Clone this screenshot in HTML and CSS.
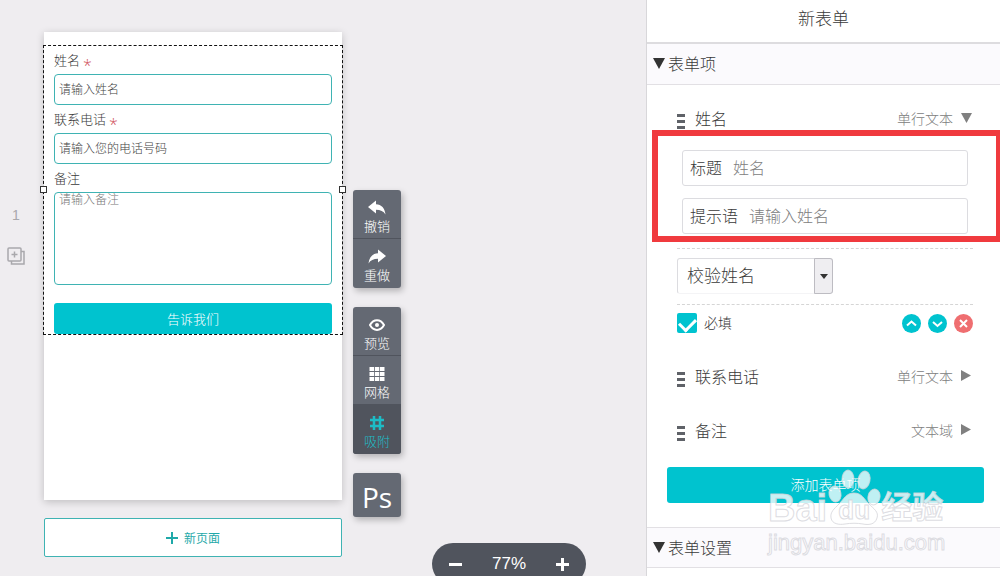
FILE: index.html
```html
<!DOCTYPE html>
<html lang="zh-CN">
<head>
    <meta charset="UTF-8">
    <meta name="viewport" content="width=device-width, initial-scale=1.0">
    <title>新表单</title>
    <link rel="stylesheet" href="styles.css">
</head>
<body>
    <main class="editor">
        <div class="page-nav">
            <span class="page-number">1</span>
            <button type="button" class="copy-page" aria-label="复制页面">
                <svg width="18" height="18" viewBox="0 0 18 18" fill="none" stroke="#a9a8ac" stroke-width="1.5">
                    <rect x="1" y="1" width="13" height="13" rx="1"/>
                    <path d="M4.500 14v3H17V4.500h-3M7.500 4.500v6M4.500 7.500h6"/>
                </svg>
            </button>
        </div>

        <div class="pages">
            <div class="phone">
                <form class="form-block">
                    <label for="name">姓名<span class="star">*</span></label>
                    <input type="text" id="name" placeholder="请输入姓名">
                    <label for="tel">联系电话<span class="star">*</span></label>
                    <input type="text" id="tel" placeholder="请输入您的电话号码">
                    <label for="note">备注</label>
                    <textarea id="note" placeholder="请输入备注"></textarea>
                    <button type="button" class="submit">告诉我们</button>
                    <span class="handle left"></span>
                    <span class="handle right"></span>
                </form>
            </div>
            <button type="button" class="new-page">
                <svg width="12" height="12" viewBox="0 0 12 12" stroke="#1fa9a9" stroke-width="2"><path d="M6 0v12M0 6h12"/></svg>
                新页面
            </button>
        </div>

        <div class="tools">
            <div class="tool-group">
                <button type="button" class="tool">
                    <svg width="18" height="16" viewBox="0 0 18 16" fill="#fff"><path d="M0 7L8 0.500v3.700c5.500.3 8.800 3.800 9.500 10.300C15.500 11.300 12.500 9.800 8 9.800v3.700z"/></svg>
                    撤销
                </button>
                <button type="button" class="tool">
                    <svg width="18" height="16" viewBox="0 0 18 16" fill="#fff"><path d="M18 7L10 0.500v3.700C4.500 4.500 1.200 8 .5 14.500 2.500 11.300 5.500 9.800 10 9.800v3.700z"/></svg>
                    重做
                </button>
            </div>
            <div class="tool-group">
                <button type="button" class="tool">
                    <svg width="18" height="16" viewBox="0 0 18 16" fill="none" stroke="#fff" stroke-width="2"><path d="M2 8c3.500-6.500 10.500-6.500 14 0-3.500 6.500-10.500 6.500-14 0z"/><circle cx="9" cy="8" r="2" fill="#fff" stroke="none"/></svg>
                    预览
                </button>
                <button type="button" class="tool">
                    <svg width="16" height="16" viewBox="0 0 16 16" fill="#fff"><path d="M0.500 1h4.500v4H0.500zM5.800 1h4.500v4H5.800zM11 1h4.500v4H11zM0.500 6h4.500v4H0.500zM5.800 6h4.500v4H5.800zM11 6h4.500v4H11zM0.500 11h4.500v4H0.500zM5.800 11h4.500v4H5.800zM11 11h4.500v4H11z"/></svg>
                    网格
                </button>
                <button type="button" class="tool active">
                    <svg width="16" height="16" viewBox="0 0 16 16" stroke="#1dbcc6" stroke-width="2.500"><path d="M5 1v14M11 1v14M1 5h14M1 11h14"/></svg>
                    吸附
                </button>
            </div>
            <div class="tool-group">
                <button type="button" class="tool ps">Ps</button>
            </div>
        </div>

        <div class="zoom-bar">
            <button type="button" aria-label="缩小"><svg width="13" height="13" viewBox="0 0 13 13" stroke="#fff" stroke-width="3"><path d="M0 6.500h13"/></svg></button>
            <span>77%</span>
            <button type="button" aria-label="放大"><svg width="13" height="13" viewBox="0 0 13 13" stroke="#fff" stroke-width="3"><path d="M0 6.500h13M6.500 0v13"/></svg></button>
        </div>
    </main>

    <aside class="sidebar">
        <h1>新表单</h1>
        <h2><svg width="12" height="12" viewBox="0 0 12 12" fill="#333"><path d="M0 1h12L6 12z"/></svg>表单项</h2>

        <div class="items">
            <div class="item">
                <span class="grip"></span>
                <span class="item-name">姓名</span>
                <span class="item-type">单行文本</span>
                <svg width="12" height="12" viewBox="0 0 12 12" fill="#808080"><path d="M0 1h11L5.500 11z"/></svg>
            </div>
            <div class="fields">
                <div class="field">
                    <label for="title">标题</label>
                    <input type="text" id="title" value="姓名">
                </div>
                <div class="field">
                    <label for="tip">提示语</label>
                    <input type="text" id="tip" value="请输入姓名">
                </div>
                <div class="highlight"></div>
            </div>
            <div class="check-type">
                <div class="select-box">
                    <select aria-label="校验">
                        <option>校验姓名</option>
                    </select>
                    <span class="select-arrow"><svg width="8" height="5" viewBox="0 0 8 5" fill="#333"><path d="M0 0h8L4 5z"/></svg></span>
                </div>
            </div>
            <div class="options">
                <input type="checkbox" id="required" checked>
                <label for="required">必填</label>
                <button type="button" class="round" aria-label="上移"><svg width="19" height="19" viewBox="0 0 19 19"><path d="M5 11.500l4.500-4 4.500 4"/></svg></button>
                <button type="button" class="round" aria-label="下移"><svg width="19" height="19" viewBox="0 0 19 19"><path d="M5 8l4.500 4 4.500-4"/></svg></button>
                <button type="button" class="round delete" aria-label="删除"><svg width="19" height="19" viewBox="0 0 19 19"><path d="M6 6l7 7M13 6l-7 7"/></svg></button>
            </div>
            <div class="item">
                <span class="grip"></span>
                <span class="item-name">联系电话</span>
                <span class="item-type">单行文本</span>
                <svg width="12" height="12" viewBox="0 0 12 12" fill="#808080"><path d="M0 0l10 5.500-10 5.500z"/></svg>
            </div>
            <div class="item">
                <span class="grip"></span>
                <span class="item-name">备注</span>
                <span class="item-type">文本域</span>
                <svg width="12" height="12" viewBox="0 0 12 12" fill="#808080"><path d="M0 0l10 5.500-10 5.500z"/></svg>
            </div>
        </div>
        <button type="button" class="add-item">添加表单项</button>

        <h2 class="settings"><svg width="12" height="12" viewBox="0 0 12 12" fill="#333"><path d="M0 1h12L6 12z"/></svg>表单设置</h2>

        <div class="watermark">
            <div class="brand">
                <span>Bai</span>
                <span class="paw">
                    <svg width="54" height="58" viewBox="0 0 54 58">
                        <ellipse cx="8" cy="25" rx="6" ry="8" transform="rotate(-12 8 25)"/>
                        <ellipse cx="21" cy="10" rx="6" ry="9"/>
                        <ellipse cx="37" cy="11" rx="6" ry="9" transform="rotate(12 37 11)"/>
                        <ellipse cx="47" cy="28" rx="6" ry="8" transform="rotate(12 47 28)"/>
                        <path d="M27 24c8 0 10 6 15 11s10 8 8 14c-2 7-9 7-14 6-6-1-12-1-18 0-6 1-13 0-14-6-1-6 3-9 8-14s7-11 15-11z"/>
                    </svg>
                    <span class="du">du</span>
                </span>
                <span class="cn">经验</span>
            </div>
            <div class="url">jingyan.baidu.com</div>
        </div>
    </aside>
</body>
</html>
```

FILE: styles.css
```css
* {
    box-sizing: border-box;
}
body {
    display: flex;
    height: 100vh;
    margin: 0;
    overflow: hidden;
    font-family: "Liberation Sans", "Noto Sans CJK SC", sans-serif;
    font-weight: 300;
    color: #3a3a3a;
    background-color: #efedf0;
}
button, input, select, textarea {
    font: inherit;
    margin: 0;
}
button {
    padding: 0;
    border: none;
    background: none;
    cursor: pointer;
}
svg {
    display: block;
    flex: none;
}

/* editor */
.editor {
    flex: 1;
    display: flex;
    position: relative;
    padding-top: 32px;
}
.page-nav {
    display: flex;
    flex-direction: column;
    align-items: center;
    width: 32px;
    margin-right: 12px;
    padding-top: 173px;
}
.page-number {
    font-size: 14px;
    line-height: 20px;
    color: #a9a8ac;
}
.copy-page {
    margin-top: 22px;
}
.pages {
    width: 298px;
}
.phone {
    height: 468px;
    padding-top: 13px;
    background-color: #fff;
    box-shadow: 0 2px 8px rgba(0, 0, 0, 0.2);
}
.form-block {
    display: flex;
    flex-direction: column;
    position: relative;
    margin: 0 -1px;
    padding: 0 10px;
    border: 1px dashed #111;
    font-size: 13px;
}
.form-block label {
    height: 28px;
    line-height: 29px;
}
.star {
    margin-left: 3px;
    line-height: 1;
    vertical-align: -6px;
    font-family: "Open Sans", sans-serif;
    font-size: 16px;
    color: #d0505a;
}
.form-block input, .form-block textarea {
    height: 31px;
    padding: 0 4px;
    border: 1px solid #3fb3b3;
    border-radius: 4px;
    background-color: #fff;
    font-size: 12px;
    outline: none;
}
.form-block textarea {
    height: 93px;
    line-height: 15px;
    resize: none;
}
.form-block input::placeholder {
    color: #444;
}
.form-block textarea::placeholder {
    color: #777;
}
.submit {
    height: 31px;
    margin-top: 18px;
    border-radius: 3px;
    background-color: #00c3cf;
    color: #fff;
}
.handle {
    position: absolute;
    top: 50%;
    width: 7px;
    height: 7px;
    margin-top: -4px;
    border: 1px solid #333;
    background-color: #fff;
}
.left {
    left: -4px;
}
.right {
    right: -4px;
}
.new-page {
    display: flex;
    justify-content: center;
    align-items: center;
    gap: 6px;
    width: 100%;
    height: 39px;
    margin-top: 18px;
    border: 1px solid #3fb3b3;
    border-radius: 2px;
    background-color: #fff;
    font-size: 12px;
    font-weight: 400;
    color: #1fa9a9;
}

/* toolbar */
.tools {
    display: flex;
    flex-direction: column;
    gap: 19px;
    width: 48px;
    margin-left: 11px;
    padding-top: 158px;
}
.tool-group {
    overflow: hidden;
    border-radius: 3px;
    background-color: #646973;
    box-shadow: 2px 3px 6px rgba(0, 0, 0, 0.25);
}
.tool {
    display: flex;
    flex-direction: column;
    align-items: center;
    gap: 1px;
    width: 100%;
    height: 49px;
    padding-top: 10px;
    border-bottom: 1px solid #50545d;
    font-size: 13px;
    line-height: 20px;
    color: #fff;
}
.tool:last-child {
    border-bottom: none;
}
.active {
    background-color: #50545d;
    color: #1dbcc6;
}
.ps {
    height: 44px;
    padding-top: 3px;
    justify-content: center;
    font-family: "Open Sans", sans-serif;
    font-size: 28px;
    font-weight: 500;
}
.zoom-bar {
    display: flex;
    justify-content: space-between;
    align-items: center;
    position: absolute;
    right: 60px;
    bottom: -9px;
    width: 154px;
    height: 42px;
    padding: 0 17px;
    border-radius: 21px;
    background-color: #50545d;
    font-family: "Liberation Sans", sans-serif;
    font-size: 17px;
    font-weight: 400;
    color: #fff;
}

/* sidebar */
.sidebar {
    flex: 0 0 354px;
    position: relative;
    overflow: hidden;
    border-left: 1px solid #d8d7da;
    background-color: #fff;
}
h1 {
    height: 44px;
    margin: 0;
    border-bottom: 2px solid #dddcdf;
    font-size: 17px;
    line-height: 40px;
    font-weight: 300;
    text-align: center;
}
h2 {
    display: flex;
    align-items: center;
    gap: 3px;
    height: 41px;
    margin: 0;
    padding: 0 0 2px 6px;
    border-bottom: 1px solid #e2e0e4;
    background-color: #fbfafd;
    font-size: 16px;
    font-weight: 300;
}
.items {
    padding: 16px 27px 18px 30px;
}
.item {
    display: flex;
    align-items: center;
    height: 36px;
    margin-bottom: 18px;
    padding-bottom: 2px;
    font-size: 16px;
}
.item:first-child, .item:last-child {
    margin-bottom: 0;
}
.grip {
    width: 8px;
    height: 15px;
    margin: 6px 10px 0 0;
    background: repeating-linear-gradient(#5f6268 0 3px, transparent 3px 6px);
}
.item-name {
    flex: 1;
}
.item-type {
    margin-right: 8px;
    font-size: 14px;
    color: #808080;
}
.fields {
    display: flex;
    flex-direction: column;
    gap: 12px;
    position: relative;
    padding: 13px 5px 14px;
    border-bottom: 1px dashed #d5d5d5;
}
.field {
    display: flex;
    align-items: center;
    gap: 11px;
    height: 36px;
    padding: 0 7px 3px;
    border: 1px solid #dcdce0;
    border-radius: 3px;
    font-size: 16px;
}
.field input {
    flex: 1;
    min-width: 0;
    padding: 0;
    border: none;
    outline: none;
    color: #808080;
}
.highlight {
    position: absolute;
    top: -7px;
    right: -29px;
    bottom: 6px;
    left: -25px;
    border: 6px solid #f03a3e;
    pointer-events: none;
}
.check-type {
    padding: 9px 0 10px;
    border-bottom: 1px dashed #d5d5d5;
}
.select-box {
    display: flex;
    width: 156px;
    height: 36px;
    border: 1px solid #dcdce0;
    border-bottom-color: #f4f4f6;
    border-radius: 3px;
}
.select-box select {
    flex: 1;
    padding: 0 9px;
    border: none;
    appearance: none;
    background: none;
    font-size: 17px;
    color: #3a3a3a;
    outline: none;
}
.select-arrow {
    display: flex;
    justify-content: center;
    align-items: center;
    width: 19px;
    margin: -1px;
    border: 1px solid #bdbcc2;
    border-radius: 0 3px 3px 0;
    background-color: #efeef1;
}
.options {
    display: flex;
    align-items: center;
    gap: 7px;
    height: 36px;
    margin-bottom: 18px;
    font-size: 14px;
}
.options label {
    flex: 1;
    padding-bottom: 2px;
}
.options input {
    display: flex;
    justify-content: center;
    width: 20px;
    height: 20px;
    border-radius: 2px;
    appearance: none;
    background-color: #00c3cf;
}
.options input:checked::after {
    content: "";
    width: 8px;
    height: 13px;
    margin-top: 2px;
    border: solid #fff;
    border-width: 0 3px 3px 0;
    transform: rotate(45deg);
}
.round {
    border-radius: 50%;
    background-color: #00c3cf;
}
.round path {
    fill: none;
    stroke: #fff;
    stroke-width: 2;
}
.delete {
    background-color: #ef6e70;
}
.add-item {
    display: block;
    width: calc(100% - 36px);
    height: 36px;
    margin: 0 16px 0 20px;
    padding-bottom: 2px;
    border-radius: 3px;
    background-color: #00c3cf;
    font-size: 14px;
    color: #fff;
}
.settings {
    margin-top: 24px;
    border-top: 1px solid #e2e0e4;
}

/* watermark */
.watermark {
    position: absolute;
    top: 469px;
    right: 54px;
    width: 178px;
    color: rgba(255, 255, 255, 0.8);
    font-weight: 700;
    -webkit-text-stroke: 1px rgba(212, 212, 218, 0.8);
    pointer-events: none;
}
.brand {
    display: flex;
    align-items: flex-end;
    height: 58px;
    font-size: 38px;
    line-height: 38px;
}
.paw {
    display: grid;
    place-items: end center;
}
.paw svg, .paw .du {
    grid-area: 1 / 1;
}
.paw svg {
    fill: rgba(255, 255, 255, 0.75);
    stroke: rgba(212, 212, 218, 0.8);
}
.paw .du {
    font-size: 26px;
    line-height: 34px;
}
.cn {
    font-size: 31px;
}
.url {
    font-size: 22px;
    font-weight: 400;
    line-height: 32px;
}
```
